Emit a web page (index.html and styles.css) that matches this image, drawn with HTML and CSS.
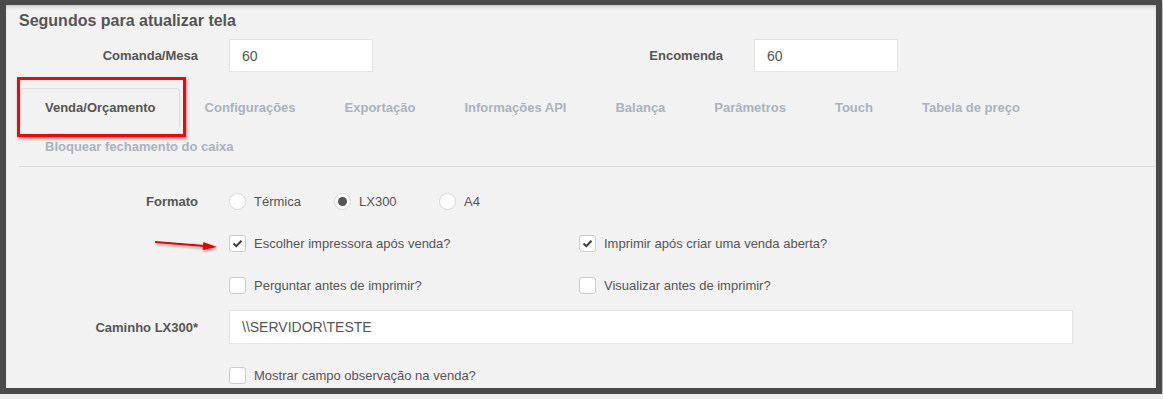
FILE: index.html
```html
<!DOCTYPE html>
<html lang="pt-BR">
<head>
    <meta charset="UTF-8">
    <title>Configurações de impressão</title>
    <link rel="stylesheet" href="styles.css">
</head>
<body>

    <div class="frame">
        <div class="content">

            <!-- Refresh timers -->
            <h3 class="section-title">Segundos para atualizar tela</h3>
            <div class="refresh-row">
                <div class="field">
                    <label>Comanda/Mesa</label>
                    <input type="text" value="60">
                </div>
                <div class="field">
                    <label>Encomenda</label>
                    <input type="text" value="60">
                </div>
            </div>

            <!-- Tabs -->
            <ul class="tabs">
                <li class="active">Venda/Orçamento</li>
                <li>Configurações</li>
                <li>Exportação</li>
                <li>Informações API</li>
                <li>Balança</li>
                <li>Parâmetros</li>
                <li>Touch</li>
                <li>Tabela de preço</li>
                <li>Bloquear fechamento do caixa</li>
            </ul>

            <!-- Form -->
            <div class="form">
                <div class="form-row">
                    <span class="label">Formato</span>
                    <span class="radio-item"><span class="radio"></span>Térmica</span>
                    <span class="radio-item"><span class="radio checked"></span>LX300</span>
                    <span class="radio-item"><span class="radio"></span>A4</span>
                </div>
                <div class="form-row offset">
                    <span class="check-item"><span class="checkbox checked"><svg viewBox="0 0 17 17"><path d="M4.5 8.5 L7.3 11.2 L12.5 5.8"/></svg></span>Escolher impressora após venda?</span>
                    <span class="check-item"><span class="checkbox checked"><svg viewBox="0 0 17 17"><path d="M4.5 8.5 L7.3 11.2 L12.5 5.8"/></svg></span>Imprimir após criar uma venda aberta?</span>
                </div>
                <div class="form-row offset">
                    <span class="check-item"><span class="checkbox"></span>Perguntar antes de imprimir?</span>
                    <span class="check-item"><span class="checkbox"></span>Visualizar antes de imprimir?</span>
                </div>
                <div class="form-row">
                    <span class="label">Caminho LX300*</span>
                    <input class="path-input" type="text" value="\\SERVIDOR\TESTE">
                </div>
                <div class="form-row offset last">
                    <span class="check-item"><span class="checkbox"></span>Mostrar campo observação na venda?</span>
                </div>
            </div>

            <!-- Annotations -->
            <div class="highlight"></div>
            <svg class="arrow" width="70" height="16" viewBox="0 0 70 16">
                <line x1="0" y1="3" x2="50" y2="7"/>
                <polygon points="62,8 48.3,3 47.7,11"/>
            </svg>
        </div>
    </div>

</body>
</html>
```

FILE: styles.css
```css
body {
    margin: 0;
    background-color: #eeeeee;
    font-family: "Liberation Sans", Arial, sans-serif;
    font-size: 13px;
    color: #555;
}
.frame {
    width: 1162px;
    height: 394px;
    box-sizing: border-box;
    border: 6px solid #4a4a4a;
    border-top-width: 5px;
    background-color: #f2f2f2;
    overflow: hidden;
    box-shadow: inset 0 3px 4px -2px rgba(0, 0, 0, 0.25), 1px 2px 2px rgba(0, 0, 0, 0.25);
}
.content {
    position: relative;
    height: 100%;
    box-sizing: border-box;
    padding: 7px 0 0 13px;
}
.section-title {
    margin: 0;
    font-size: 16px;
    line-height: 18px;
    font-weight: bold;
    color: #555;
}
.refresh-row {
    display: flex;
    margin-top: 9px;
}
.field {
    display: flex;
    align-items: center;
}
.field + .field {
    margin-left: 171px;
}
.field label,
.form-row .label {
    width: 179px;
    margin-right: 31px;
    text-align: right;
    font-weight: bold;
    color: #555;
}
.field input,
.path-input {
    width: 144px;
    height: 33px;
    box-sizing: border-box;
    border: 1px solid #e3e3e3;
    background-color: #fff;
    padding: 0 12px;
    font-family: "Liberation Sans", Arial, sans-serif;
    font-size: 14px;
    color: #555;
    outline: none;
}

/* Tabs */
.tabs {
    display: flex;
    flex-wrap: wrap;
    list-style: none;
    margin: 16px 0 0 0;
    padding: 0 0 0 1px;
    border-bottom: 1px solid #dddddd;
}
.tabs li {
    height: 39px;
    box-sizing: border-box;
    line-height: 38px;
    padding: 0 23px 0 24px;
    border: 1px solid transparent;
    border-bottom: none;
    border-radius: 4px 4px 0 0;
    font-weight: bold;
    color: #aab2c0;
    white-space: nowrap;
}
.tabs li.active {
    border-color: #dddddd;
    color: #555;
}

/* Form */
.form {
    margin-top: 17px;
}
.form-row {
    display: flex;
    align-items: center;
    height: 34px;
    margin-bottom: 8px;
}
.form-row.offset {
    padding-left: 210px;
}
.form-row.last {
    margin-top: 14px;
}
.path-input {
    width: 844px;
    height: 34px;
}
.radio-item {
    display: flex;
    align-items: center;
    width: 105px;
}
.radio {
    width: 17px;
    height: 17px;
    box-sizing: border-box;
    border: 1px solid #d8d8d8;
    border-radius: 50%;
    background-color: #fff;
    margin-right: 8px;
    display: flex;
    justify-content: center;
    align-items: center;
}
.radio.checked::after {
    content: '';
    width: 9px;
    height: 9px;
    border-radius: 50%;
    background-color: #555;
}
.check-item {
    display: flex;
    align-items: center;
    width: 350px;
}
.checkbox {
    width: 17px;
    height: 17px;
    box-sizing: border-box;
    border: 1px solid #cccccc;
    border-radius: 3px;
    background-color: #fff;
    margin-right: 8px;
    position: relative;
}
.checkbox svg {
    position: absolute;
    top: -1px;
    left: -1px;
    width: 17px;
    height: 17px;
}
.checkbox path {
    fill: none;
    stroke: #3a3a3a;
    stroke-width: 2;
}

/* Annotations */
.highlight {
    position: absolute;
    left: 11px;
    top: 72px;
    width: 169px;
    height: 60px;
    box-sizing: border-box;
    border: 3px solid #ff0000;
    box-shadow: 1px 2px 3px rgba(0, 0, 0, 0.35);
}
.arrow {
    position: absolute;
    left: 149px;
    top: 234px;
    filter: drop-shadow(1px 2px 1px rgba(0, 0, 0, 0.3));
}
.arrow line {
    stroke: #e60000;
    stroke-width: 2;
}
.arrow polygon {
    fill: #e60000;
}
```
